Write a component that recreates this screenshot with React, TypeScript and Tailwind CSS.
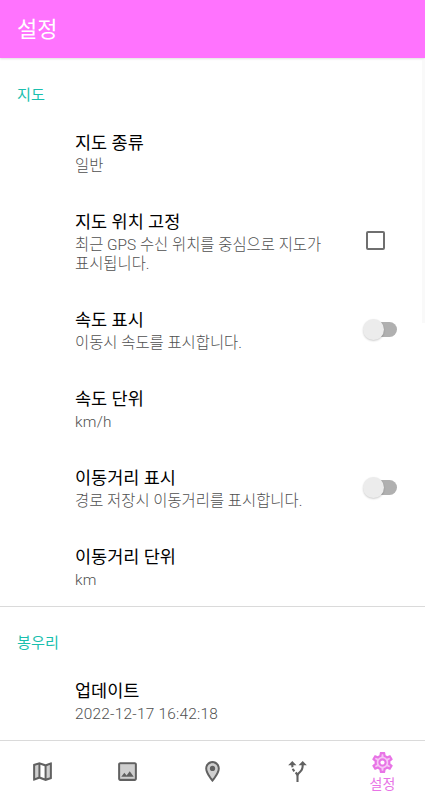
import React from 'react';
import clsx from 'clsx';

interface Preference {
  title: string;
  summary: string;
  control?: 'checkbox' | 'switch';
}

const mapPreferences: Preference[] = [
  { title: '지도 종류', summary: '일반' },
  {
    title: '지도 위치 고정',
    summary: '최근 GPS 수신 위치를 중심으로 지도가 표시됩니다.',
    control: 'checkbox',
  },
  { title: '속도 표시', summary: '이동시 속도를 표시합니다.', control: 'switch' },
  { title: '속도 단위', summary: 'km/h' },
  { title: '이동거리 표시', summary: '경로 저장시 이동거리를 표시합니다.', control: 'switch' },
  { title: '이동거리 단위', summary: 'km' },
];

const peakPreferences: Preference[] = [{ title: '업데이트', summary: '2022-12-17 16:42:18' }];

// unit and date values are set slightly wider than Korean sentences
const isLatin = (text: string) => /^[\x20-\x7e]+$/.test(text);

function Checkbox() {
  return <div className="mt-[-3px] mr-[40px] size-[19px] shrink-0 rounded-[2px] border-2 border-[#6f6f6f]" />;
}

function Switch() {
  return (
    <div className="mt-[-2px] mr-[28px] flex h-[15px] w-[32px] shrink-0 items-center rounded-full bg-[#b0b0b0]">
      <div className="-ml-[2px] size-[21px] shrink-0 rounded-full bg-[#ececec] shadow-[0_1px_2px_rgba(0,0,0,0.2)]" />
    </div>
  );
}

function PreferenceRow({ title, summary, control }: Preference) {
  return (
    <div className="flex items-center justify-between pt-[18px] pb-[16px] pl-[75px]">
      <div className="w-[262px]">
        <div className="text-[17.5px] leading-[24px] text-black">{title}</div>
        <div
          className={clsx(
            'mt-[2px] text-[15.4px] leading-[19px] font-light break-keep text-[#505050]',
            isLatin(summary) && 'tracking-[0.23px]'
          )}
        >
          {summary}
        </div>
      </div>
      {control === 'checkbox' && <Checkbox />}
      {control === 'switch' && <Switch />}
    </div>
  );
}

function Category({ title, items }: { title: string; items: Preference[] }) {
  return (
    <section className="flex flex-col">
      <h2 className="pt-[26px] pb-[7px] pl-[17px] text-[15.2px] leading-[22px] text-[#1abfae]">{title}</h2>
      {items.map((item) => (
        <PreferenceRow key={item.title} {...item} />
      ))}
    </section>
  );
}

function MapIcon() {
  return (
    <svg viewBox="0 0 24 24" className="size-[25px]" fill="currentColor">
      <path opacity=".3" d="M5 18.31l3-1.16V5.45L5 6.46zm11 .24l3-1.01V5.69l-3 1.17z" />
      <path d="M20.5 3l-.16.03L15 5.1 9 3 3.36 4.9c-.21.07-.36.25-.36.48V20.5c0 .28.22.5.5.5l.16-.03L9 18.9l6 2.1 5.64-1.9c.21-.07.36-.25.36-.48V3.5c0-.28-.22-.5-.5-.5zM8 17.15l-3 1.16V6.46l3-1.01v11.7zm6 1.38l-4-1.4V5.47l4 1.4v11.66zm5-.99l-3 1.01V6.86l3-1.16v11.84z" />
    </svg>
  );
}

function PhotoIcon() {
  return (
    <svg viewBox="0 0 24 24" className="size-[25px]" fill="currentColor">
      <path opacity=".3" d="M5 5h14v14H5z" />
      <path d="M19 5v14H5V5h14m0-2H5c-1.1 0-2 .9-2 2v14c0 1.1.9 2 2 2h14c1.1 0 2-.9 2-2V5c0-1.1-.9-2-2-2z" />
      <path d="M14.14 11.86l-3 3.87L9 13.14 6 17h12z" />
    </svg>
  );
}

function PlaceIcon() {
  return (
    <svg viewBox="0 0 24 24" className="size-[25px]" fill="currentColor">
      <path opacity=".3" d="M12 4C9.24 4 7 6.24 7 9c0 2.85 2.92 7.21 5 9.88 2.11-2.69 5-7 5-9.88 0-2.76-2.24-5-5-5z" />
      <path d="M12 2C8.13 2 5 5.13 5 9c0 5.25 7 13 7 13s7-7.75 7-13c0-3.87-3.13-7-7-7zM7 9c0-2.76 2.24-5 5-5s5 2.24 5 5c0 2.88-2.88 7.19-5 9.88C9.92 16.21 7 11.85 7 9z" />
      <circle cx="12" cy="9" r="2.5" />
    </svg>
  );
}

function RouteIcon() {
  return (
    <svg viewBox="0 0 24 24" className="size-[25px]" fill="currentColor">
      <path d="M9.78 11.16l-1.42 1.42c-.68-.69-1.34-1.58-1.79-2.94l1.94-.49c.32.89.77 1.5 1.27 2.01zM11 6L7 2 3 6h3.02c.02.81.08 1.54.19 2.17l1.94-.49C8.08 7.2 8.03 6.63 8.02 6H11zm10 0l-4-4-4 4h2.99c-.1 3.68-1.28 4.75-2.54 5.88-.5.44-1.01.92-1.45 1.55-.34-.49-.73-.88-1.13-1.24L9.46 13.6c.93.85 1.54 1.54 1.54 3.4v5h2v-5c0-2.02.71-2.66 1.79-3.63 1.38-1.24 3.08-2.78 3.2-7.37H21z" />
    </svg>
  );
}

function SettingsIcon() {
  return (
    <svg viewBox="0 0 24 24" className="size-[25px]" fill="currentColor">
      <path
        opacity=".4"
        fillRule="evenodd"
        d="M19.43 12.98c.04-.32.07-.64.07-.98 0-.34-.03-.66-.07-.98l2.11-1.65c.19-.15.24-.42.12-.64l-2-3.46c-.09-.16-.26-.25-.44-.25-.06 0-.12.01-.17.03l-2.49 1c-.52-.4-1.08-.73-1.69-.98l-.38-2.65C14.46 2.18 14.25 2 14 2h-4c-.25 0-.46.18-.49.42l-.38 2.65c-.61.25-1.17.59-1.69.98l-2.49-1c-.06-.02-.12-.03-.18-.03-.17 0-.34.09-.43.25l-2 3.46c-.13.22-.07.49.12.64l2.11 1.65c-.04.32-.07.65-.07.98 0 .33.03.66.07.98l-2.11 1.65c-.19.15-.24.42-.12.64l2 3.46c.09.16.26.25.44.25.06 0 .12-.01.17-.03l2.49-1c.52.4 1.08.73 1.69.98l.38 2.65c.03.24.24.42.49.42h4c.25 0 .46-.18.49-.42l.38-2.65c.61-.25 1.17-.59 1.69-.98l2.49 1c.06.02.12.03.18.03.17 0 .34-.09.43-.25l2-3.46c.12-.22.07-.49-.12-.64l-2.11-1.65zM12 8.5a3.5 3.5 0 1 0 0 7 3.5 3.5 0 0 0 0-7z"
      />
      <path d="M19.43 12.98c.04-.32.07-.64.07-.98 0-.34-.03-.66-.07-.98l2.11-1.65c.19-.15.24-.42.12-.64l-2-3.46c-.09-.16-.26-.25-.44-.25-.06 0-.12.01-.17.03l-2.49 1c-.52-.4-1.08-.73-1.69-.98l-.38-2.65C14.46 2.18 14.25 2 14 2h-4c-.25 0-.46.18-.49.42l-.38 2.65c-.61.25-1.17.59-1.69.98l-2.49-1c-.06-.02-.12-.03-.18-.03-.17 0-.34.09-.43.25l-2 3.46c-.13.22-.07.49.12.64l2.11 1.65c-.04.32-.07.65-.07.98 0 .33.03.66.07.98l-2.11 1.65c-.19.15-.24.42-.12.64l2 3.46c.09.16.26.25.44.25.06 0 .12-.01.17-.03l2.49-1c.52.4 1.08.73 1.69.98l.38 2.65c.03.24.24.42.49.42h4c.25 0 .46-.18.49-.42l.38-2.65c.61-.25 1.17-.59 1.69-.98l2.49 1c.06.02.12.03.18.03.17 0 .34-.09.43-.25l2-3.46c.12-.22.07-.49-.12-.64l-2.11-1.65zm-1.98-1.71c.04.31.05.52.05.73 0 .21-.02.43-.05.73l-.14 1.13.89.7 1.08.84-.7 1.21-1.27-.51-1.04-.42-.9.68c-.43.32-.84.56-1.25.73l-1.06.43-.16 1.13-.2 1.35h-1.4l-.19-1.35-.16-1.13-1.06-.43c-.43-.18-.83-.41-1.23-.71l-.91-.7-1.06.43-1.27.51-.7-1.21 1.08-.84.89-.7-.14-1.13c-.03-.31-.05-.54-.05-.74s.02-.43.05-.73l.14-1.13-.89-.7-1.08-.84.7-1.21 1.27.51 1.04.42.9-.68c.43-.32.84-.56 1.25-.73l1.06-.43.16-1.13.2-1.35h1.39l.19 1.35.16 1.13 1.06.43c.43.18.83.41 1.23.71l.91.7 1.06-.43 1.27-.51.7 1.21-1.07.85-.89.7.14 1.13zM12 8c-2.21 0-4 1.79-4 4s1.79 4 4 4 4-1.79 4-4-1.79-4-4-4zm0 6c-1.1 0-2-.9-2-2s.9-2 2-2 2 .9 2 2-.9 2-2 2z" />
    </svg>
  );
}

const tabs = [
  { id: 'map', icon: MapIcon },
  { id: 'photo', icon: PhotoIcon },
  { id: 'place', icon: PlaceIcon },
  { id: 'route', icon: RouteIcon },
  { id: 'settings', icon: SettingsIcon, label: '설정' },
];

export default function App() {
  return (
    <div className="relative flex h-[800px] w-[425px] flex-col overflow-hidden bg-white font-['Roboto','Noto_Sans_CJK_KR',sans-serif]">
      <header className="flex h-[58px] shrink-0 items-center bg-[#ff73fe] pt-[2px] pl-[17px] shadow-[0_1px_2px_rgba(0,0,0,0.12)]">
        <h1 className="text-[22px] leading-[30px] text-white">설정</h1>
      </header>

      <main className="flex min-h-0 flex-1 flex-col overflow-hidden">
        <Category title="지도" items={mapPreferences} />
        <hr className="shrink-0 border-t-[1.5px] border-[#dadada]" />
        <div className="-mt-px">
          <Category title="봉우리" items={peakPreferences} />
        </div>
      </main>

      {/* scroll indicator */}
      <div className="absolute top-[60px] right-0 h-[263px] w-[3px] bg-[#f9f9f9]" />

      <nav className="grid h-[60px] shrink-0 grid-cols-5 border-t border-[#dadada] bg-white">
        {tabs.map(({ id, icon: Icon, label }) => (
          <div
            key={id}
            className={clsx(
              'flex flex-col items-center justify-center',
              label ? 'pt-[3px] text-[#e874e6]' : 'pt-px text-[#616161]'
            )}
          >
            <Icon />
            {label && <span className="text-[14px] leading-[19px]">{label}</span>}
          </div>
        ))}
      </nav>
    </div>
  );
}
